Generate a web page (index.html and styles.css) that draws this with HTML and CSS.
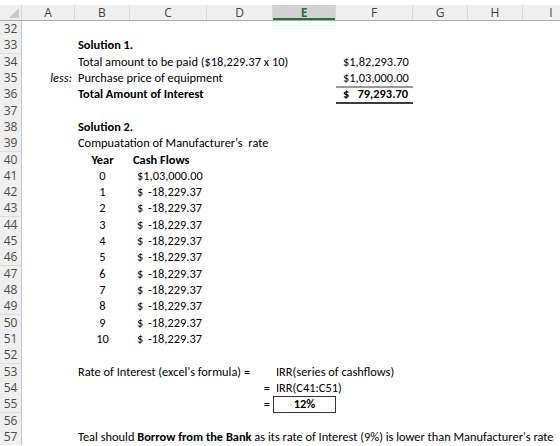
FILE: index.html
```html
<!DOCTYPE html>
<html lang="en">
<head>
    <meta charset="UTF-8">
    <meta name="viewport" content="width=device-width, initial-scale=1.0">
    <title>Interest Workings</title>
    <link rel="stylesheet" href="styles.css">
</head>
<body>
<div class="sheet">
    <div class="top-strip"></div>

    <div class="row head">
        <div class="corner"><span class="tri"></span></div>
        <div class="colhead">A</div>
        <div class="colhead">B</div>
        <div class="colhead">C</div>
        <div class="colhead">D</div>
        <div class="colhead sel">E</div>
        <div class="colhead">F</div>
        <div class="colhead">G</div>
        <div class="colhead">H</div>
        <div class="colhead">I</div>
    </div>

    <div class="row"><div class="rn">32</div></div>
    <div class="row">
        <div class="rn">33</div>
        <div class="cell b bold">Solution 1.</div>
    </div>
    <div class="row">
        <div class="rn">34</div>
        <div class="cell b">Total amount to be paid ($18,229.37 x 10)</div>
        <div class="cell f acct"><span>$</span><span>1,82,293.70</span></div>
    </div>
    <div class="row">
        <div class="rn">35</div>
        <div class="cell a rt ital">less:</div>
        <div class="cell b">Purchase price of equipment</div>
        <div class="cell f acct line-grey"><span>$</span><span>1,03,000.00</span></div>
    </div>
    <div class="row">
        <div class="rn">36</div>
        <div class="cell b bold">Total Amount of Interest</div>
        <div class="cell f acct bold line-dark"><span>$</span><span>79,293.70</span></div>
    </div>
    <div class="row"><div class="rn">37</div></div>
    <div class="row">
        <div class="rn">38</div>
        <div class="cell b bold">Solution 2.</div>
    </div>
    <div class="row">
        <div class="rn">39</div>
        <div class="cell b">Compuatation of Manufacturer's&nbsp; rate</div>
    </div>
    <div class="row">
        <div class="rn">40</div>
        <div class="cell b ctr bold">Year</div>
        <div class="cell c bold">Cash Flows</div>
    </div>
    <div class="row">
        <div class="rn">41</div>
        <div class="cell b ctr">0</div>
        <div class="cell c acct"><span>$</span><span>1,03,000.00</span></div>
    </div>
    <div class="row">
        <div class="rn">42</div>
        <div class="cell b ctr">1</div>
        <div class="cell c acct"><span>$</span><span>-18,229.37</span></div>
    </div>
    <div class="row">
        <div class="rn">43</div>
        <div class="cell b ctr">2</div>
        <div class="cell c acct"><span>$</span><span>-18,229.37</span></div>
    </div>
    <div class="row">
        <div class="rn">44</div>
        <div class="cell b ctr">3</div>
        <div class="cell c acct"><span>$</span><span>-18,229.37</span></div>
    </div>
    <div class="row">
        <div class="rn">45</div>
        <div class="cell b ctr">4</div>
        <div class="cell c acct"><span>$</span><span>-18,229.37</span></div>
    </div>
    <div class="row">
        <div class="rn">46</div>
        <div class="cell b ctr">5</div>
        <div class="cell c acct"><span>$</span><span>-18,229.37</span></div>
    </div>
    <div class="row">
        <div class="rn">47</div>
        <div class="cell b ctr">6</div>
        <div class="cell c acct"><span>$</span><span>-18,229.37</span></div>
    </div>
    <div class="row">
        <div class="rn">48</div>
        <div class="cell b ctr">7</div>
        <div class="cell c acct"><span>$</span><span>-18,229.37</span></div>
    </div>
    <div class="row">
        <div class="rn">49</div>
        <div class="cell b ctr">8</div>
        <div class="cell c acct"><span>$</span><span>-18,229.37</span></div>
    </div>
    <div class="row">
        <div class="rn">50</div>
        <div class="cell b ctr">9</div>
        <div class="cell c acct"><span>$</span><span>-18,229.37</span></div>
    </div>
    <div class="row">
        <div class="rn">51</div>
        <div class="cell b ctr">10</div>
        <div class="cell c acct"><span>$</span><span>-18,229.37</span></div>
    </div>
    <div class="row"><div class="rn">52</div></div>
    <div class="row">
        <div class="rn">53</div>
        <div class="cell b">Rate of Interest (excel's formula) =</div>
        <div class="cell e">IRR(series of cashflows)</div>
    </div>
    <div class="row">
        <div class="rn">54</div>
        <div class="cell d rt">=</div>
        <div class="cell e">IRR(C41:C51)</div>
    </div>
    <div class="row">
        <div class="rn">55</div>
        <div class="cell d rt">=</div>
        <div class="cell e ctr bold boxed">12%</div>
    </div>
    <div class="row"><div class="rn">56</div></div>
    <div class="row">
        <div class="rn">57</div>
        <div class="cell b">Teal should <b>Borrow from the Bank</b> as its rate of Interest (9%) is lower than Manufacturer's rate</div>
    </div>
</div>
</body>
</html>
```

FILE: styles.css
```css
body {
    margin: 0;
    padding: 0;
    background: #ffffff;
    overflow: hidden;
    font-family: Carlito, Calibri, Lato, sans-serif;
}

.sheet {
    width: 580px;
}

.top-strip {
    height: 5px;
    background: #ffffff;
}

.row {
    display: grid;
    grid-template-columns: 22px 53px 55px 77px 66px 63px 77px 55px 55px 57px;
    height: 16.32px;
}

.row > div {
    grid-row: 1;
    min-width: 0;
}

/* column headers */
.head {
    height: 15px;
    background: #efefef;
    border-bottom: 1px solid #ababab;
}

.corner {
    position: relative;
    border-right: 1px solid #d4d4d4;
}

.tri {
    position: absolute;
    right: 2px;
    bottom: 2px;
    width: 0;
    height: 0;
    border-left: 10px solid transparent;
    border-bottom: 10px solid #c8c8c8;
}

.colhead {
    font-family: "Open Sans", "Liberation Sans", sans-serif;
    font-size: 12px;
    color: #444444;
    text-align: center;
    line-height: 15px;
    border-right: 1px solid #d8d8d8;
}

.colhead.sel {
    background: #d2d2d2;
    color: #217346;
    font-weight: bold;
    box-shadow: inset 0 -2px 0 #217346;
}

/* row numbers */
.rn {
    grid-column: 1;
    background: #efefef;
    border-right: 1px solid #c6c6c6;
    border-bottom: 1px solid #dcdcdc;
    font-family: "Open Sans", "Liberation Sans", sans-serif;
    font-size: 12px;
    color: #4a4a4a;
    text-align: center;
    line-height: 16px;
    box-sizing: border-box;
}

/* cells */
.cell {
    font-size: 12.4px;
    line-height: 16px;
    color: #000000;
    white-space: nowrap;
    padding: 0 3px;
    box-sizing: border-box;
}

.a { grid-column: 2; }
.b { grid-column: 3; }
.c { grid-column: 4; }
.d { grid-column: 5; }
.e { grid-column: 6; }
.f { grid-column: 7; }

.bold { font-weight: bold; }
.ital { font-style: italic; }
.ctr { text-align: center; }
.rt { text-align: right; }

.acct {
    display: flex;
    justify-content: space-between;
    padding: 0 5px 0 7px;
}

.line-grey {
    border-bottom: 2px solid #9a9a9a;
}

.line-dark {
    border-bottom: 2px solid #3c3c3c;
}

.boxed {
    border: 1px solid #333333;
    line-height: 14px;
}
```
